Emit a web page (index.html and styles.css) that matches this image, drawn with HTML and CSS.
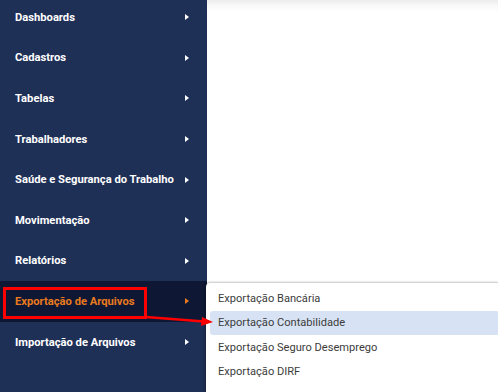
FILE: index.html
```html
<!DOCTYPE html>
<html lang="pt-br">
<head>
    <meta charset="UTF-8">
    <meta name="viewport" content="width=device-width, initial-scale=1.0">
    <title>Menu</title>
    <link rel="stylesheet" href="styles.css">
</head>
<body>
    <div class="app">
        <nav class="sidebar">
            <ul class="menu">
                <li class="item"><span>Dashboards</span><i class="seta"></i></li>
                <li class="item"><span>Cadastros</span><i class="seta"></i></li>
                <li class="item"><span>Tabelas</span><i class="seta"></i></li>
                <li class="item"><span>Trabalhadores</span><i class="seta"></i></li>
                <li class="item"><span>Saúde e Segurança do Trabalho</span><i class="seta"></i></li>
                <li class="item"><span>Movimentação</span><i class="seta"></i></li>
                <li class="item"><span>Relatórios</span><i class="seta"></i></li>
                <li class="item ativo"><span>Exportação de Arquivos</span><i class="seta"></i></li>
                <li class="item"><span>Importação de Arquivos</span><i class="seta"></i></li>
            </ul>
        </nav>
        <main class="conteudo"></main>
    </div>

    <ul class="submenu">
        <li>Exportação Bancária</li>
        <li class="selecionado">Exportação Contabilidade</li>
        <li>Exportação Seguro Desemprego</li>
        <li>Exportação DIRF</li>
    </ul>

    <div class="destaque"></div>
    <svg class="flecha" width="498" height="392" viewBox="0 0 498 392">
        <line x1="146" y1="317" x2="204" y2="321.5" stroke="#f00" stroke-width="2.5"/>
        <polygon points="213,322 202,317 201,326" fill="#f00"/>
    </svg>
</body>
</html>
```

FILE: styles.css
```css
*{
    margin: 0px;
    padding: 0px;
    box-sizing: border-box;
}
body{
    width: 498px;
    height: 392px;
    overflow: hidden;
    position: relative;
    font-family: Roboto, "Liberation Sans", sans-serif;
    background: #fff;
}
.app{
    display: flex;
    height: 100%;
}
.sidebar{
    width: 207px;
    flex-shrink: 0;
    background-color: #1f3057;
}
.menu{
    list-style: none;
    margin-top: -3px;
}
.item{
    height: 40.6px;
    display: flex;
    align-items: center;
    justify-content: space-between;
    padding: 0 18px 0 15px;
    color: #fff;
    font-size: 11.2px;
    font-weight: bold;
}
.item.ativo{
    background-color: #0e1834;
    color: #ea7a1e;
}
.seta{
    width: 0;
    height: 0;
    border-top: 3.5px solid transparent;
    border-bottom: 3.5px solid transparent;
    border-left: 4px solid #fff;
}
.ativo .seta{
    border-left-color: #ea7a1e;
}
.conteudo{
    flex: 1;
    background: linear-gradient(#ececec 0px, #f8f8f8 5px, #fff 12px);
}

.submenu{
    position: absolute;
    left: 206px;
    top: 283px;
    width: 294px;
    height: 120px;
    background: #fff;
    list-style: none;
    padding: 3px 1px 0 4px;
    border-radius: 4px 0 0 0;
    box-shadow: -1px 0 3px rgba(0,0,0,0.25), 0 -1px 2px rgba(0,0,0,0.12);
}
.submenu li{
    height: 24.5px;
    display: flex;
    align-items: center;
    padding-left: 8px;
    font-size: 11.1px;
    color: #3c3c3c;
    border-radius: 3px;
}
.submenu li.selecionado{
    background-color: #d7e3f4;
}

.destaque{
    position: absolute;
    left: 3px;
    top: 287px;
    width: 144px;
    height: 32px;
    border: 3px solid #f00;
}
.flecha{
    position: absolute;
    left: 0;
    top: 0;
}
```
